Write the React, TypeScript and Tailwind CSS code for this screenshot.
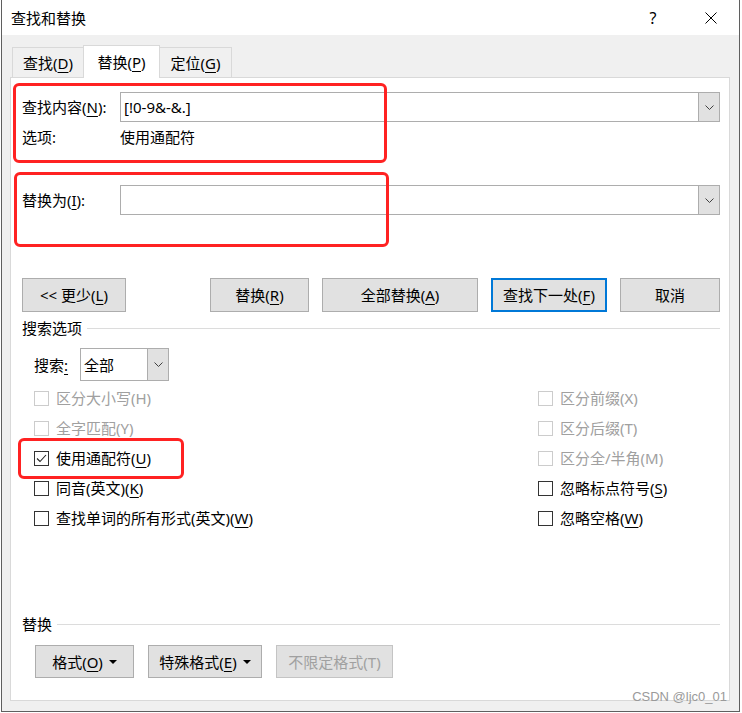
import type { ReactNode } from 'react';

const U = ({ children }: { children: ReactNode }) => (
  <span className="underline decoration-1 underline-offset-[3px]">{children}</span>
);

const Chevron = () => (
  <svg width="9" height="5" viewBox="0 0 9 5" className="block">
    <polyline points="0.5,0.5 4.5,4.5 8.5,0.5" fill="none" stroke="#404040" strokeWidth="1" />
  </svg>
);

const Caret = () => (
  <svg width="8" height="4" viewBox="0 0 8 4" className="ml-[6px] block">
    <polygon points="0,0 8,0 4,4" fill="#000000" />
  </svg>
);

const Combo = ({ value }: { value?: string }) => (
  <div className="flex h-[30px] flex-1 border border-[#adadad] bg-white">
    <div className="flex flex-1 items-center pl-[3px]">{value}</div>
    <div className="flex w-[21px] items-center justify-center border-l border-[#adadad] bg-[#e1e1e1]">
      <Chevron />
    </div>
  </div>
);

interface BtnProps {
  w: string;
  h?: string;
  primary?: boolean;
  disabled?: boolean;
  children: ReactNode;
}

const Btn = ({ w, h = 'h-[34px]', primary, disabled, children }: BtnProps) => {
  const border = primary
    ? 'border-2 border-[#0078d7]'
    : disabled
      ? 'border border-[#c4c4c4]'
      : 'border border-[#adadad]';
  return (
    <div
      className={`flex items-center justify-center bg-[#e1e1e1] ${w} ${h} ${border} ${
        disabled ? 'text-[#a0a0a0]' : 'text-black'
      }`}
    >
      {children}
    </div>
  );
};

interface CheckProps {
  checked?: boolean;
  disabled?: boolean;
  children: ReactNode;
}

const Check = ({ checked, disabled, children }: CheckProps) => (
  <div className="flex h-[30px] items-center gap-[7px]">
    <div
      className={`flex h-[15px] w-[15px] items-center justify-center border bg-white ${
        disabled ? 'border-[#cccccc]' : 'border-[#333333]'
      }`}
    >
      {checked && (
        <svg width="13" height="13" viewBox="0 0 13 13" className="block">
          <polyline points="2,6.5 5,9.5 11,3" fill="none" stroke="#222222" strokeWidth="1.1" />
        </svg>
      )}
    </div>
    <span className={disabled ? 'text-[#a0a0a0]' : 'text-black'}>{children}</span>
  </div>
);

const Heading = ({ children }: { children: ReactNode }) => (
  <div className="flex h-[20px] items-center gap-[5px]">
    <span>{children}</span>
    <div className="h-px flex-1 bg-[#dcdcdc]" />
  </div>
);

export default function App() {
  return (
    <div className="relative h-[713px] w-[742px] overflow-hidden bg-white font-['Noto_Sans','Noto_Sans_CJK_SC',sans-serif] text-[15px] leading-[20px] text-black">
      <div className="ml-px flex h-[712px] w-[739px] flex-col border-x border-b border-[#5f5f5f] bg-[#f0f0f0]">
        {/* title bar */}
        <div className="flex h-[35px] items-center bg-white pl-[9px]">
          <span className="flex-1">查找和替换</span>
          <span className="w-[10px] text-center text-[16px]">?</span>
          <svg width="12" height="12" viewBox="0 0 12 12" className="ml-[47px] mr-[22px] block">
            <path d="M0.5 0.5 L11.5 11.5 M11.5 0.5 L0.5 11.5" stroke="#000000" strokeWidth="1" />
          </svg>
        </div>

        <div className="flex flex-1 flex-col pb-[10px] pl-[8px] pr-[9px] pt-[10px]">
          {/* tabs */}
          <div className="ml-[2px] flex h-[32px] items-end">
            <div className="flex h-[30px] w-[71px] items-center justify-center border-l border-t border-[#d9d9d9] bg-[#f0f0f0]">
              查找(<U>D</U>)
            </div>
            <div className="relative z-10 -mb-px flex h-[33px] w-[77px] items-center justify-center border-x border-t border-[#d9d9d9] bg-white">
              替换(<U>P</U>)
            </div>
            <div className="flex h-[30px] w-[72px] items-center justify-center border-r border-t border-[#d9d9d9] bg-[#f0f0f0]">
              定位(<U>G</U>)
            </div>
          </div>

          {/* panel */}
          <div className="flex flex-1 flex-col border border-[#d9d9d9] bg-white pl-[11px] pr-[9px]">
            <div className="mt-[14px] flex h-[30px] items-center">
              <span className="w-[98px]">
                查找内容(<U>N</U>):
              </span>
              <Combo value="[!0-9&-&.]" />
            </div>
            <div className="mt-[5px] flex h-[20px] items-center">
              <span className="w-[98px]">选项:</span>
              <span>使用通配符</span>
            </div>

            <div className="mt-[38px] flex h-[30px] items-center">
              <span className="w-[98px]">
                替换为(<U>I</U>):
              </span>
              <Combo />
            </div>

            <div className="mt-[63px] flex items-center justify-between">
              <Btn w="w-[104px]">
                &lt;&lt; 更少(<U>L</U>)
              </Btn>
              <div className="flex gap-[13px]">
                <Btn w="w-[99px]">
                  替换(<U>R</U>)
                </Btn>
                <Btn w="w-[156px]">
                  全部替换(<U>A</U>)
                </Btn>
                <Btn w="w-[116px]" primary>
                  查找下一处(<U>F</U>)
                </Btn>
                <Btn w="w-[100px]">取消</Btn>
              </div>
            </div>

            <div className="mt-[6px]">
              <Heading>搜索选项</Heading>
            </div>

            <div className="mt-[10px] flex h-[33px] items-center pl-[12px]">
              <span className="w-[46px]">
                搜索<U>:</U>
              </span>
              <div className="flex h-[33px] w-[89px] border border-[#adadad] bg-white">
                <div className="flex flex-1 items-center pl-[3px]">全部</div>
                <div className="flex w-[21px] items-center justify-center border-l border-[#adadad] bg-[#e1e1e1]">
                  <Chevron />
                </div>
              </div>
            </div>

            <div className="mt-[2px] flex">
              <div className="flex w-[516px] flex-col pl-[12px]">
                <Check disabled>区分大小写(H)</Check>
                <Check disabled>全字匹配(Y)</Check>
                <Check checked>
                  使用通配符(<U>U</U>)
                </Check>
                <Check>
                  同音(英文)(<U>K</U>)
                </Check>
                <Check>
                  查找单词的所有形式(英文)(<U>W</U>)
                </Check>
              </div>
              <div className="flex flex-col">
                <Check disabled>区分前缀(X)</Check>
                <Check disabled>区分后缀(T)</Check>
                <Check disabled>区分全/半角(M)</Check>
                <Check>
                  忽略标点符号(<U>S</U>)
                </Check>
                <Check>
                  忽略空格(<U>W</U>)
                </Check>
              </div>
            </div>

            <div className="mt-[81px]">
              <Heading>替换</Heading>
            </div>

            <div className="ml-[13px] mt-[11px] flex gap-[14px]">
              <Btn w="w-[99px]" h="h-[33px]">
                格式(<U>O</U>)
                <Caret />
              </Btn>
              <Btn w="w-[114px]" h="h-[33px]">
                特殊格式(<U>E</U>)
                <Caret />
              </Btn>
              <Btn w="w-[117px]" h="h-[33px]" disabled>
                不限定格式(T)
              </Btn>
            </div>
          </div>
        </div>
      </div>

      {/* annotation boxes */}
      <div className="absolute left-[13px] top-[83px] h-[80px] w-[374px] rounded-[6px] border-[3px] border-[#ff2222]" />
      <div className="absolute left-[14px] top-[172px] h-[75px] w-[375px] rounded-[6px] border-[3px] border-[#ff2222]" />
      <div className="absolute left-[18px] top-[438px] h-[41px] w-[166px] rounded-[6px] border-[3px] border-[#ff2222]" />

      {/* watermark */}
      <div className="absolute right-[15px] top-[688px] font-['Liberation_Sans',sans-serif] text-[13px] leading-[18px] text-[#9a9a9a]">
        CSDN @ljc0_01
      </div>
    </div>
  );
}
